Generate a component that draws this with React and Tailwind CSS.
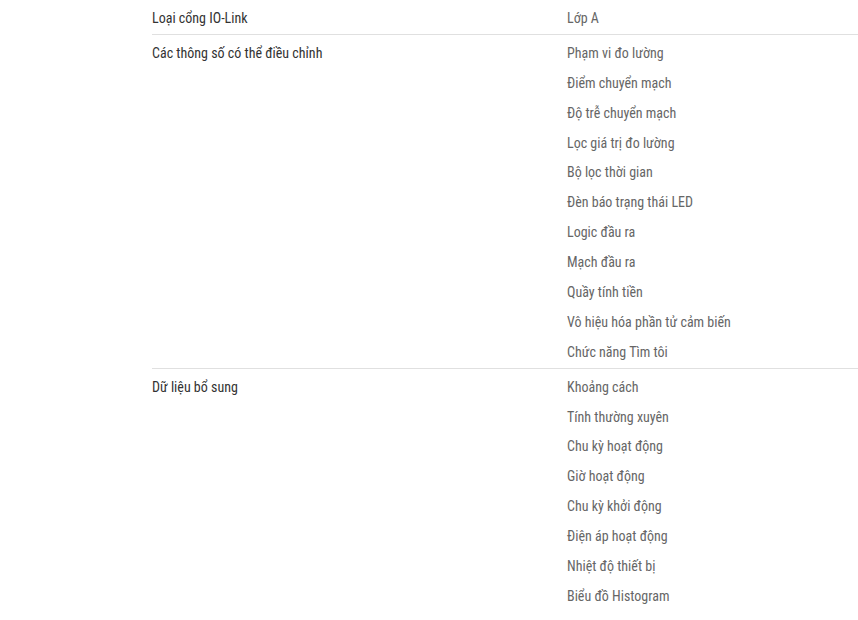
import React from 'react';

const SECTIONS = [
  { label: 'Loại cổng IO-Link', values: ['Lớp A'] },
  {
    label: 'Các thông số có thể điều chỉnh',
    values: [
      'Phạm vi đo lường',
      'Điểm chuyển mạch',
      'Độ trễ chuyển mạch',
      'Lọc giá trị đo lường',
      'Bộ lọc thời gian',
      'Đèn báo trạng thái LED',
      'Logic đầu ra',
      'Mạch đầu ra',
      'Quầy tính tiền',
      'Vô hiệu hóa phần tử cảm biến',
      'Chức năng Tìm tôi'
    ]
  },
  {
    label: 'Dữ liệu bổ sung',
    values: [
      'Khoảng cách',
      'Tính thường xuyên',
      'Chu kỳ hoạt động',
      'Giờ hoạt động',
      'Chu kỳ khởi động',
      'Điện áp hoạt động',
      'Nhiệt độ thiết bị',
      'Biểu đồ Histogram'
    ]
  }
];

export default function App() {
  return (
    <div className="min-h-[620px] bg-white pl-[152px] font-['Roboto_Condensed','Roboto',sans-serif] text-[14px] [font-stretch:condensed]">
      {SECTIONS.map((s, i) => (
        <div
          key={s.label}
          className={`grid grid-cols-[415px_1fr] pt-[4px] ${i < SECTIONS.length - 1 ? 'border-b border-[#e0e0e0]' : ''}`}
        >
          <div className="h-[29.9px] leading-[29.9px] text-[#333]">{s.label}</div>
          <ul>
            {s.values.map(v => (
              <li key={v} className="h-[29.9px] leading-[29.9px] text-[#666]">
                {v}
              </li>
            ))}
          </ul>
        </div>
      ))}
    </div>
  );
}
